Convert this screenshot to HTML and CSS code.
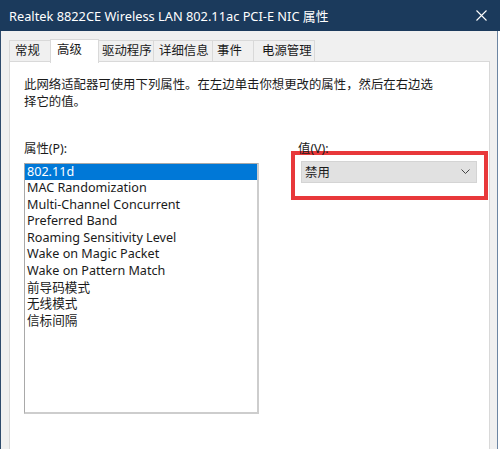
FILE: index.html
```html
<!DOCTYPE html>
<html lang="zh-CN">
<head>
    <meta charset="UTF-8">
    <title>Realtek 8822CE Wireless LAN 802.11ac PCI-E NIC 属性</title>
    <link rel="stylesheet" href="styles.css">
</head>
<body>
    <div class="window">
        <div class="titlebar">
            <span class="title">Realtek 8822CE Wireless LAN 802.11ac PCI-E NIC 属性</span>
            <svg class="close" width="11" height="11" viewBox="0 0 11 11">
                <path d="M0.5 0.5 L10.5 10.5 M10.5 0.5 L0.5 10.5" stroke="#ffffff" stroke-width="1.1" fill="none"/>
            </svg>
        </div>

        <div class="window-body">
            <div class="tabs">
                <div class="tab">常规</div>
                <div class="tab active">高级</div>
                <div class="tab">驱动程序</div>
                <div class="tab">详细信息</div>
                <div class="tab">事件</div>
                <div class="tab">电源管理</div>
            </div>

            <div class="sheet">
                <p class="desc">此网络适配器可使用下列属性。在左边单击你想更改的属性，然后在右边选择它的值。</p>

                <div class="props">
                    <div class="col">
                        <label class="field-label">属性(P):</label>
                        <ul class="listbox">
                            <li class="selected">802.11d</li>
                            <li>MAC Randomization</li>
                            <li>Multi-Channel Concurrent</li>
                            <li>Preferred Band</li>
                            <li>Roaming Sensitivity Level</li>
                            <li>Wake on Magic Packet</li>
                            <li>Wake on Pattern Match</li>
                            <li>前导码模式</li>
                            <li>无线模式</li>
                            <li>信标间隔</li>
                        </ul>
                    </div>

                    <div class="col">
                        <label class="field-label value-label">值(V):</label>
                        <div class="highlight">
                            <div class="dropdown">
                                <span>禁用</span>
                                <svg width="9" height="5" viewBox="0 0 9 5">
                                    <path d="M0.5 0.5 L4.5 4.5 L8.5 0.5" stroke="#444" stroke-width="1" fill="none"/>
                                </svg>
                            </div>
                        </div>
                    </div>
                </div>
            </div>
        </div>
    </div>
</body>
</html>
```

FILE: styles.css
```css
* {
    box-sizing: border-box;
}

body {
    margin: 0;
    background: #ffffff;
    font-family: "Noto Sans", "Noto Sans CJK SC", sans-serif;
    font-size: 12.4px;
    color: #1a1a1a;
}

.window {
    width: 500px;
    height: 449px;
    overflow: hidden;
    display: flex;
    flex-direction: column;
}

.titlebar {
    height: 31px;
    flex-shrink: 0;
    background: #1b3a5c;
    color: #ffffff;
    display: flex;
    align-items: center;
    justify-content: space-between;
    padding: 0 13px 1px 9px;
}

.title {
    font-size: 12.8px;
    white-space: nowrap;
}

.close {
    display: block;
}

.window-body {
    flex: 1;
    width: 498px;
    background: #f0f0f0;
    border-left: 1px solid #2e4b6c;
    border-right: 1px solid #6d86a3;
    padding: 8px 0 0 8px;
}

/* tab strip */
.tabs {
    display: flex;
    align-items: flex-end;
    height: 23px;
    position: relative;
    z-index: 1;
}

.tab {
    height: 21px;
    margin-bottom: 1px;
    margin-right: -1px;
    padding-left: 5px;
    line-height: 19px;
    background: #f0f0f0;
    border: 1px solid #d9d9d9;
    border-bottom: none;
    white-space: nowrap;
}

.tab:nth-child(1) { width: 44px; }
.tab:nth-child(3) { width: 57px; padding-left: 4px; }
.tab:nth-child(4) { width: 60px; }
.tab:nth-child(5) { width: 42px; padding-left: 4px; }
.tab:nth-child(6) { width: 62px; padding-left: 8px; }

.tab.active {
    width: 49px;
    height: 24px;
    margin: 0 -1px -1px -2px;
    padding-left: 6px;
    line-height: 20px;
    background: #ffffff;
    position: relative;
}

.tab.active + .tab {
    margin-left: -1px;
}

/* tab page */
.sheet {
    width: 481px;
    height: 400px;
    margin-top: -1px;
    background: #ffffff;
    border: 1px solid #d9d9d9;
    padding: 15px 1px 0 14px;
}

.desc {
    margin: 0;
    max-width: 415px;
    line-height: 16.5px;
}

.props {
    display: grid;
    grid-template-columns: 235px 197px;
    column-gap: 32px;
    margin-top: 31px;
}

.field-label {
    display: block;
    line-height: 16.5px;
}

.value-label {
    padding-left: 7px;
}

.listbox {
    list-style: none;
    margin: 5px 0 0;
    padding: 0;
    height: 251px;
    font-size: 12.6px;
    border: 1px solid #a9a9a9;
    border-right: 2px solid #cdcdcd;
    border-bottom: 2px solid #cdcdcd;
}

.listbox li {
    padding-left: 2px;
    line-height: 16.6px;
    white-space: nowrap;
}

.listbox li.selected {
    background: #0078d7;
    color: #ffffff;
}

/* annotation box around the value field */
.highlight {
    margin-top: -7px;
    height: 49px;
    border: 4px solid #e8383a;
    padding: 6px 7px 0 6px;
}

.dropdown {
    height: 22px;
    background: #e1e1e1;
    border: 1px solid #d4d4d4;
    display: flex;
    align-items: center;
    justify-content: space-between;
    padding: 0 6px 0 3px;
}
```
